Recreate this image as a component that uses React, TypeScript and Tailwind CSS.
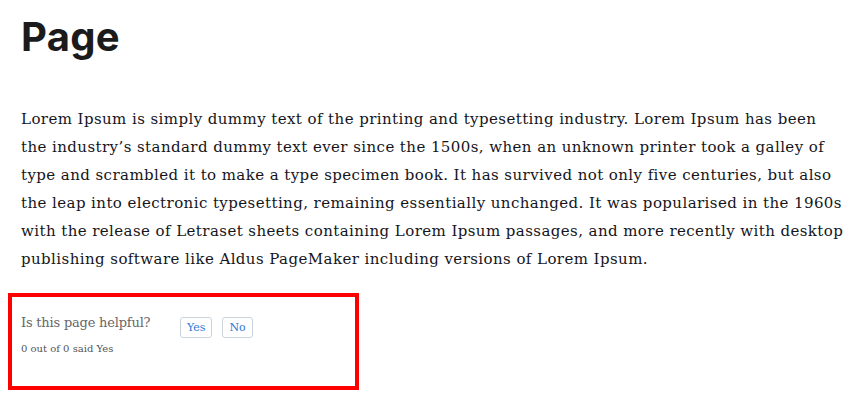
export default function App() {
  const lines = [
    'Lorem Ipsum is simply dummy text of the printing and typesetting industry. Lorem Ipsum has been',
    'the industry\u2019s standard dummy text ever since the 1500s, when an unknown printer took a galley of',
    'type and scrambled it to make a type specimen book. It has survived not only five centuries, but also',
    'the leap into electronic typesetting, remaining essentially unchanged. It was popularised in the 1960s',
    'with the release of Letraset sheets containing Lorem Ipsum passages, and more recently with desktop',
    'publishing software like Aldus PageMaker including versions of Lorem Ipsum.',
  ];

  return (
    <div className="min-h-[407px] bg-white pt-[9px]">
      <h1 className="px-[21px] font-['Inter',sans-serif] text-[40px] font-bold leading-[56px] tracking-[0.3px] text-[#1b1b1b]">
        Page
      </h1>

      <div className="mt-[40px] px-[21px] font-['DejaVu_Serif',serif] text-[15px] leading-[28px] tracking-[0.42px] text-[#15151c]">
        {lines.map((line, i) => (
          <div key={i} className="whitespace-nowrap">
            {line}
          </div>
        ))}
      </div>

      <div className="mx-[8px] mt-[20px] h-[97px] w-[351px] border-4 border-[#ff0000] px-[9px] pt-[16px] font-['DejaVu_Serif',serif]">
        <div className="flex items-start">
          <span className="w-[159px] text-[13px] leading-[20px] tracking-[-0.2px] text-[#666666]">Is this page helpful?</span>
          <div className="mt-[4px] flex gap-[10px]">
            <button className="h-[21px] rounded-[3px] border border-[#c9d4dd] px-[6px] text-[11px] leading-[19px] text-[#2b7bd6]">
              Yes
            </button>
            <button className="h-[21px] rounded-[3px] border border-[#c9d4dd] px-[6px] text-[11px] leading-[19px] text-[#2b7bd6]">
              No
            </button>
          </div>
        </div>
        <div className="mt-[4px] text-[10px] leading-[14px] text-[#555555]">0 out of 0 said Yes</div>
      </div>
    </div>
  );
}
